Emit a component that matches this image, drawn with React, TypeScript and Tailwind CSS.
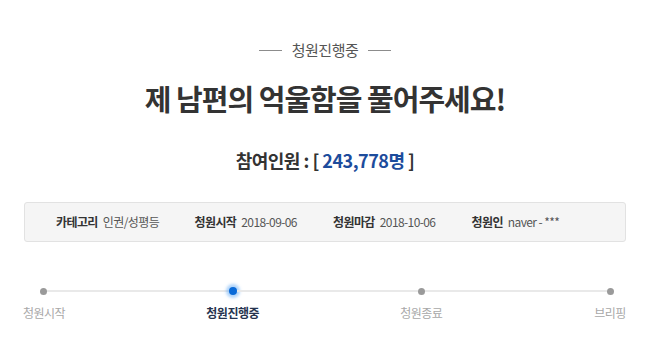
import React from "react";

const font = { fontFamily: '"Noto Sans CJK KR", "Noto Sans", sans-serif' };

const info = [
  { label: "카테고리", value: "인권/성평등" },
  { label: "청원시작", value: "2018-09-06" },
  { label: "청원마감", value: "2018-10-06" },
  { label: "청원인", value: "naver - ***" },
];

const steps = [
  { name: "청원시작", active: false },
  { name: "청원진행중", active: true },
  { name: "청원종료", active: false },
  { name: "브리핑", active: false },
];

function Dot({ active }: { active: boolean }) {
  if (active) {
    return (
      <span className="w-[8px] h-[8px] rounded-full bg-[#0a6ad8] shadow-[0_0_3px_3px_rgba(80,160,245,0.45)] shrink-0" />
    );
  }
  return <span className="w-[7px] h-[7px] rounded-full bg-[#9a9a9a] shrink-0" />;
}

export default function App() {
  return (
    <div className="w-[650px] h-[347px] bg-white overflow-hidden flex flex-col items-center" style={font}>
      <div className="mt-[40px] flex items-center gap-[10px] h-[20px]">
        <span className="w-[23px] h-px bg-[#8c8c8c]" />
        <span className="text-[15px] leading-[20px] text-[#555] tracking-[-0.5px]">청원진행중</span>
        <span className="w-[23px] h-px bg-[#8c8c8c]" />
      </div>

      <h1 className="mt-[18px] text-[29px] leading-[40px] font-bold text-[#333] tracking-[-1px]">
        제 남편의 억울함을 풀어주세요!
      </h1>

      <p className="mt-[30px] text-[18px] leading-[24px] font-bold text-[#333] tracking-[-0.5px]">
        참여인원 : [ <span className="text-[#1d4c9c]">243,778명</span> ]
      </p>

      <div className="mt-[30px] w-[602px] h-[40px] self-start ml-[24px] rounded-[3px] border border-[#e2e2e2] bg-[#f5f5f5] grid grid-cols-[repeat(4,138.5px)] items-center pl-[31px]">
        {info.map((it) => (
          <div key={it.label} className="flex items-center gap-[5px] text-[12px] leading-[16px] tracking-[-0.6px]">
            <span className="font-bold text-[#333]">{it.label}</span>
            <span className="text-[#555]">{it.value}</span>
          </div>
        ))}
      </div>

      <div className="mt-[43px] self-start ml-[40px] w-[574px] h-[12px] flex items-center">
        {steps.map((s, i) => (
          <React.Fragment key={s.name}>
            <Dot active={s.active} />
            {i < steps.length - 1 && <span className="flex-1 h-[2px] bg-[#e9e9e9]" />}
          </React.Fragment>
        ))}
      </div>

      <div className="mt-[7px] self-start ml-[4px] w-[646px] flex justify-between">
        {steps.map((s) => (
          <span
            key={s.name}
            className={
              "w-[80px] text-center text-[12px] leading-[18px] tracking-[-0.5px] " +
              (s.active ? "font-bold text-[#26344f]" : "text-[#a8a8a8]")
            }
          >
            {s.name}
          </span>
        ))}
      </div>
    </div>
  );
}
